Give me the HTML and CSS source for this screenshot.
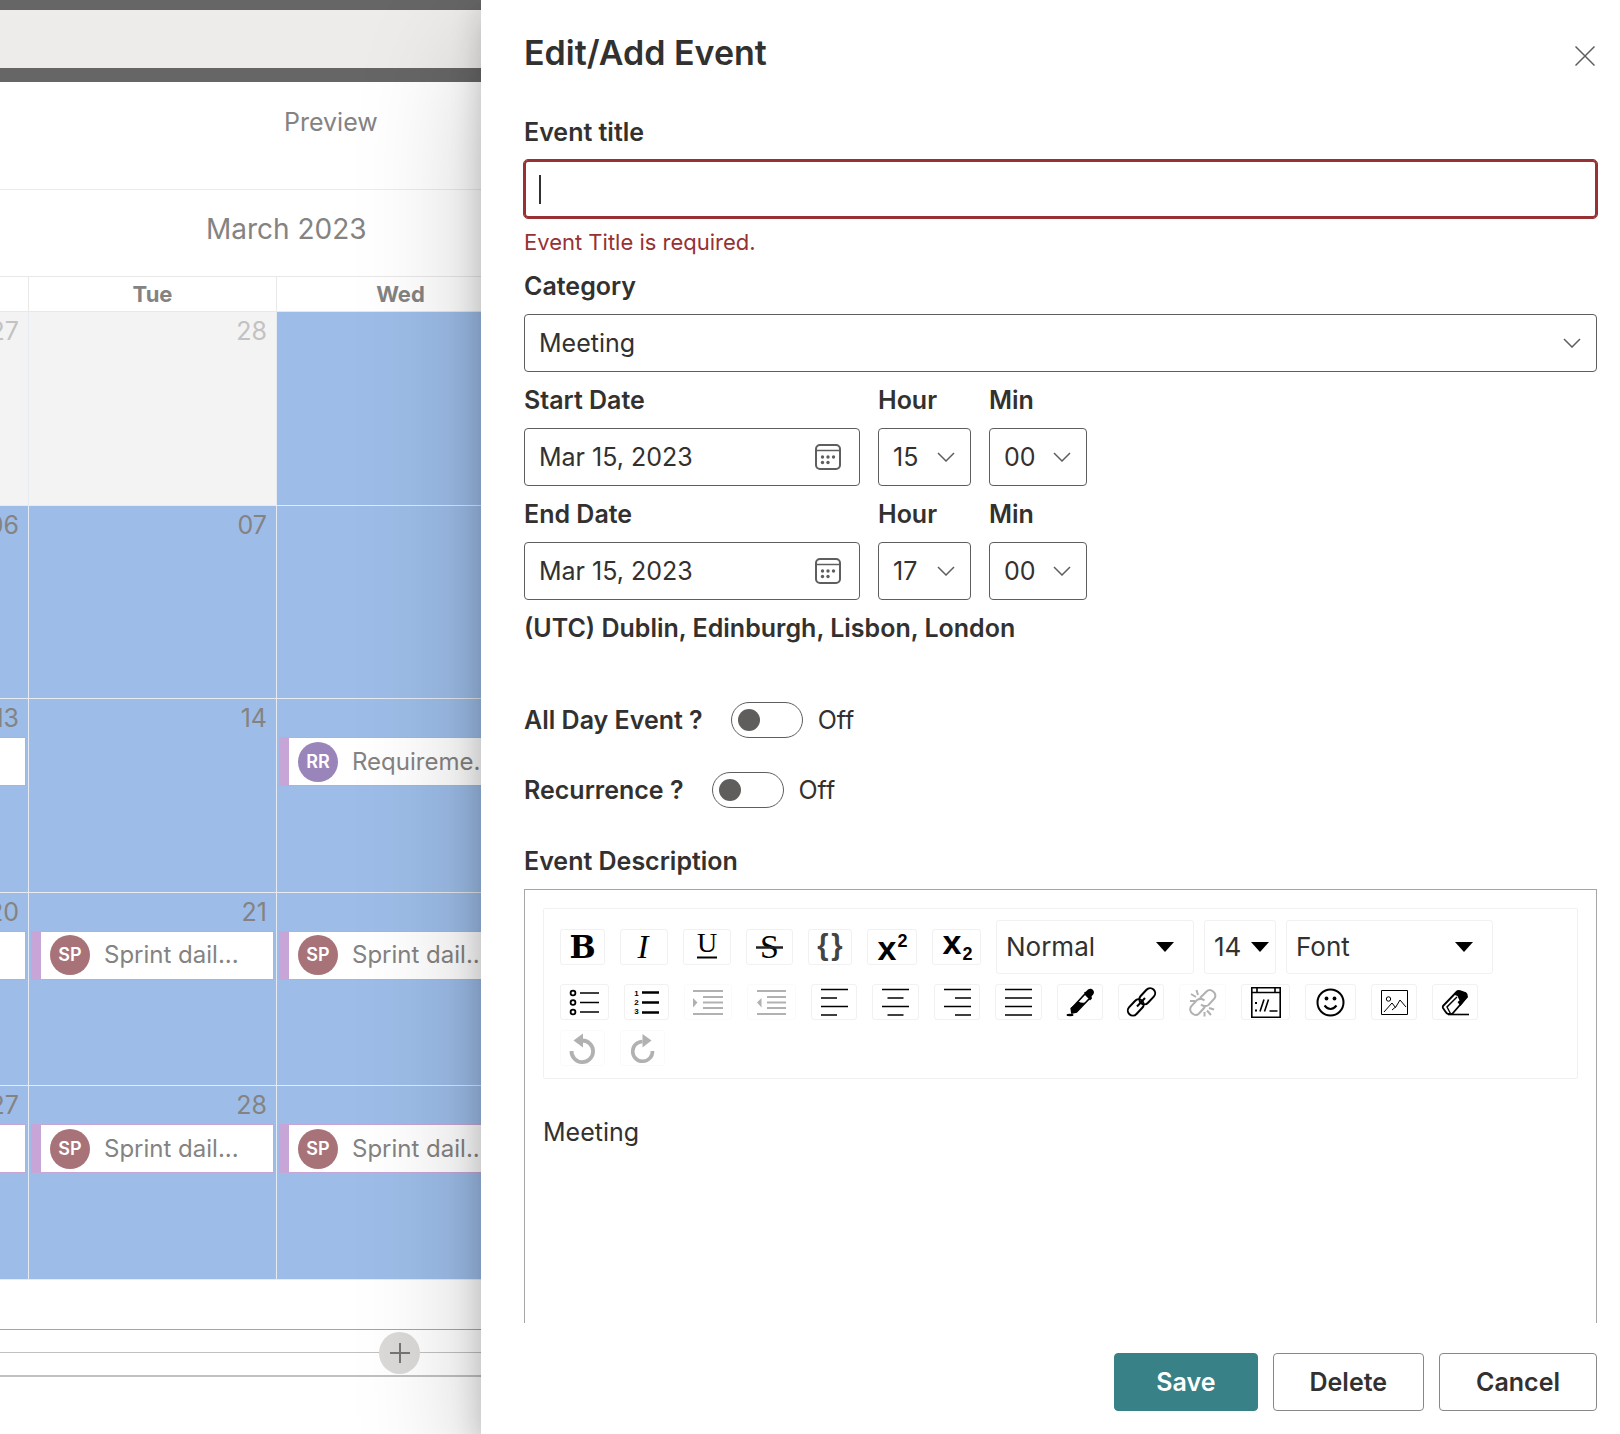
FILE: index.html
```html
<!DOCTYPE html>
<html lang="en">
<head>
<meta charset="utf-8">
<title>Edit/Add Event</title>
<link rel="stylesheet" href="styles.css">
</head>
<body>
<div class="layout">
  <main class="page">
    <div class="page-strip"></div>
    <div class="command-bar"></div>
    <div class="page-strip page-strip-thick"></div>
    <div class="preview-bar"><span>Preview</span></div>
    <h2 class="month">March 2023</h2>
    <table class="calendar">
      <thead>
        <tr><th></th><th>Tue</th><th>Wed</th></tr>
      </thead>
      <tbody>
        <tr>
          <td class="off-range"><div class="day">27</div></td>
          <td class="off-range"><div class="day">28</div></td>
          <td></td>
        </tr>
        <tr>
          <td><div class="day">06</div></td>
          <td><div class="day">07</div></td>
          <td></td>
        </tr>
        <tr>
          <td><div class="day">13</div><div class="event"></div></td>
          <td><div class="day">14</div></td>
          <td><div class="day"></div><div class="event"><span class="avatar avatar-rr">RR</span><span class="event-name">Requireme...</span></div></td>
        </tr>
        <tr>
          <td><div class="day">20</div><div class="event"></div></td>
          <td><div class="day">21</div><div class="event"><span class="avatar">SP</span><span class="event-name">Sprint dail...</span></div></td>
          <td><div class="day"></div><div class="event"><span class="avatar">SP</span><span class="event-name">Sprint dail...</span></div></td>
        </tr>
        <tr>
          <td><div class="day">27</div><div class="event"></div></td>
          <td><div class="day">28</div><div class="event"><span class="avatar">SP</span><span class="event-name">Sprint dail...</span></div></td>
          <td><div class="day"></div><div class="event"><span class="avatar">SP</span><span class="event-name">Sprint dail...</span></div></td>
        </tr>
      </tbody>
    </table>
    <div class="add-section">
      <span class="add-line"></span>
      <button class="add-button" type="button" aria-label="Add a new web part">
        <svg width="20" height="20" viewBox="0 0 20 20"><path d="M10 0v20M0 10h20" stroke="#767573" stroke-width="2"/></svg>
      </button>
      <span class="add-line"></span>
    </div>
  </main>

  <form class="drawer">
    <header class="drawer-header">
      <h1>Edit/Add Event</h1>
      <button class="close" type="button" aria-label="Close">
        <svg width="20" height="20" viewBox="0 0 20 20"><path d="M0.500 0.500l19 19M19.500 0.500l-19 19" stroke="#5f5e5c" stroke-width="1.500"/></svg>
      </button>
    </header>

    <div class="drawer-body">
      <div class="field">
        <label for="title">Event title</label>
        <div class="control">
          <input class="box box-invalid" id="title" type="text" aria-describedby="title-error">
          <span class="caret"></span>
        </div>
        <p class="error" id="title-error">Event Title is required.</p>
      </div>

      <div class="field">
        <label for="category">Category</label>
        <div class="control">
          <select class="box" id="category"><option>Meeting</option></select>
          <svg class="control-icon" width="18" height="10" viewBox="0 0 18 10"><path d="M1 1l8 8 8-8" fill="none" stroke="#5f5e5c" stroke-width="1.500"/></svg>
        </div>
      </div>

      <div class="date-row">
        <div class="field date">
          <label for="start">Start Date</label>
          <div class="control">
            <input class="box" id="start" type="text" value="Mar 15, 2023">
            <svg class="control-icon" width="26" height="26" viewBox="0 0 26 26"><rect x="1" y="1" width="24" height="24" rx="4" fill="none" stroke="#5f5e5c" stroke-width="2"/><path d="M1 6.500h24" stroke="#5f5e5c" stroke-width="1.500"/><g fill="#5f5e5c"><circle cx="7.500" cy="13" r="1.700"/><circle cx="13" cy="13" r="1.700"/><circle cx="18.500" cy="13" r="1.700"/><circle cx="7.500" cy="18.500" r="1.700"/><circle cx="13" cy="18.500" r="1.700"/></g></svg>
          </div>
        </div>
        <div class="field hour">
          <label for="start-hour">Hour</label>
          <div class="control">
            <select class="box" id="start-hour"><option>15</option></select>
            <svg class="control-icon" width="18" height="10" viewBox="0 0 18 10"><path d="M1 1l8 8 8-8" fill="none" stroke="#5f5e5c" stroke-width="1.500"/></svg>
          </div>
        </div>
        <div class="field minute">
          <label for="start-min">Min</label>
          <div class="control">
            <select class="box" id="start-min"><option>00</option></select>
            <svg class="control-icon" width="18" height="10" viewBox="0 0 18 10"><path d="M1 1l8 8 8-8" fill="none" stroke="#5f5e5c" stroke-width="1.500"/></svg>
          </div>
        </div>
      </div>

      <div class="date-row">
        <div class="field date">
          <label for="end">End Date</label>
          <div class="control">
            <input class="box" id="end" type="text" value="Mar 15, 2023">
            <svg class="control-icon" width="26" height="26" viewBox="0 0 26 26"><rect x="1" y="1" width="24" height="24" rx="4" fill="none" stroke="#5f5e5c" stroke-width="2"/><path d="M1 6.500h24" stroke="#5f5e5c" stroke-width="1.500"/><g fill="#5f5e5c"><circle cx="7.500" cy="13" r="1.700"/><circle cx="13" cy="13" r="1.700"/><circle cx="18.500" cy="13" r="1.700"/><circle cx="7.500" cy="18.500" r="1.700"/><circle cx="13" cy="18.500" r="1.700"/></g></svg>
          </div>
        </div>
        <div class="field hour">
          <label for="end-hour">Hour</label>
          <div class="control">
            <select class="box" id="end-hour"><option>17</option></select>
            <svg class="control-icon" width="18" height="10" viewBox="0 0 18 10"><path d="M1 1l8 8 8-8" fill="none" stroke="#5f5e5c" stroke-width="1.500"/></svg>
          </div>
        </div>
        <div class="field minute">
          <label for="end-min">Min</label>
          <div class="control">
            <select class="box" id="end-min"><option>00</option></select>
            <svg class="control-icon" width="18" height="10" viewBox="0 0 18 10"><path d="M1 1l8 8 8-8" fill="none" stroke="#5f5e5c" stroke-width="1.500"/></svg>
          </div>
        </div>
      </div>

      <p class="timezone">(UTC) Dublin, Edinburgh, Lisbon, London</p>

      <div class="toggles">
        <div class="toggle-row">
          <label for="all-day">All Day Event ?</label>
          <input class="toggle" id="all-day" type="checkbox" role="switch">
          <span class="toggle-state">Off</span>
        </div>
        <div class="toggle-row">
          <label for="recurrence">Recurrence ?</label>
          <input class="toggle" id="recurrence" type="checkbox" role="switch">
          <span class="toggle-state">Off</span>
        </div>
      </div>

      <div class="field editor-field">
        <span class="editor-label" id="description-label">Event Description</span>
        <div class="editor">
          <div class="toolbar">
            <div class="tool-row">
              <button class="tool" type="button" aria-label="Bold"><svg width="43" height="34"><text class="glyph-slab" x="21.500" y="28" font-size="31" font-weight="700">B</text></svg></button>
              <button class="tool" type="button" aria-label="Italic"><svg width="46" height="34"><text class="glyph-serif" x="22" y="28" font-size="33" font-style="italic">I</text></svg></button>
              <button class="tool" type="button" aria-label="Underline"><svg width="46" height="34"><text class="glyph-serif" x="23" y="22" font-size="28">U</text><path d="M13 27.500h20" stroke="#000" stroke-width="2"/></svg></button>
              <button class="tool" type="button" aria-label="Strikethrough"><svg width="45" height="34"><text class="glyph-serif" x="22.500" y="28" font-size="34">S</text><path d="M9 17.500h27" stroke="#222" stroke-width="2.500"/></svg></button>
              <button class="tool" type="button" aria-label="Monospace"><svg width="42" height="34"><text class="glyph-sans" x="14" y="25" font-size="29" fill="#444">{</text><text class="glyph-sans" x="28" y="25" font-size="29" fill="#444">}</text></svg></button>
              <button class="tool" type="button" aria-label="Superscript"><svg width="48" height="34"><text class="glyph-sans" x="19" y="30" font-size="34">x</text><text class="glyph-sans" x="34.500" y="17" font-size="18">2</text></svg></button>
              <button class="tool" type="button" aria-label="Subscript"><svg width="47" height="34"><text class="glyph-sans" x="19" y="24" font-size="34">x</text><text class="glyph-sans" x="34.500" y="30" font-size="18">2</text></svg></button>
              <div class="tool-selects">
                <div class="tool-select block-type">
                  <select aria-label="Block type"><option>Normal</option></select>
                  <svg class="control-icon" width="18" height="10"><path d="M0 0h18l-9 10z"/></svg>
                </div>
                <div class="tool-select font-size">
                  <select aria-label="Font size"><option>14</option></select>
                  <svg class="control-icon" width="18" height="10"><path d="M0 0h18l-9 10z"/></svg>
                </div>
                <div class="tool-select font-family">
                  <select aria-label="Font"><option>Font</option></select>
                  <svg class="control-icon" width="18" height="10"><path d="M0 0h18l-9 10z"/></svg>
                </div>
              </div>
            </div>
            <div class="tool-row">
              <button class="tool" type="button" aria-label="Unordered list"><svg width="47" height="34" fill="none" stroke="#000"><g stroke-width="1.800"><circle cx="12" cy="8" r="2.400"/><circle cx="12" cy="17.500" r="2.400"/><circle cx="12" cy="27" r="2.400"/></g><path d="M19 8h19M19 17.500h19M19 27h19" stroke-width="1.700"/></svg></button>
              <button class="tool" type="button" aria-label="Ordered list"><svg width="43" height="34"><text class="glyph-sans" x="11.500" y="11" font-size="8">1</text><text class="glyph-sans" x="11.500" y="20" font-size="8">2</text><text class="glyph-sans" x="11.500" y="29" font-size="8">3</text><path d="M17 7.500h17M17 17.500h17M17 27.500h17" stroke="#000" stroke-width="2.500"/></svg></button>
              <button class="tool" type="button" aria-label="Indent" disabled><svg width="46" height="34"><path d="M8 6h30M18 12h20M18 17.500h20M18 23h20M8 29h30" stroke="#000" stroke-width="2"/><path d="M8 13l4.500 4.500-4.500 5z"/></svg></button>
              <button class="tool" type="button" aria-label="Outdent" disabled><svg width="47" height="34"><path d="M9 6h29M19 12h19M19 17.500h19M19 23h19M9 29h29" stroke="#000" stroke-width="2"/><path d="M13.500 13l-4.500 4.500 4.500 5z"/></svg></button>
              <button class="tool" type="button" aria-label="Align left"><svg width="44" height="34"><path d="M9 4.500h27M9 13h16M9 21.500h27M9 30h16" stroke="#000" stroke-width="1.600"/></svg></button>
              <button class="tool" type="button" aria-label="Align center"><svg width="45" height="34"><path d="M9 4.500h27M14.500 13h16M9 21.500h27M14.500 30h16" stroke="#000" stroke-width="1.600"/></svg></button>
              <button class="tool" type="button" aria-label="Align right"><svg width="44" height="34"><path d="M9 4.500h27M20 13h16M9 21.500h27M20 30h16" stroke="#000" stroke-width="1.600"/></svg></button>
              <button class="tool" type="button" aria-label="Justify"><svg width="45" height="34"><path d="M9 4.500h27M9 13h27M9 21.500h27M9 30h27" stroke="#000" stroke-width="1.600"/></svg></button>
              <button class="tool" type="button" aria-label="Text color"><svg width="44" height="34"><path d="M26 7.500l2-1 2-2c3-2.500 7.500 1 5.500 4.500l-2 2.500.5 2-2 2z"/><path d="M27 9l4.500 4.500L18.500 27l-4.500 1-.5-4.500z" fill="#fff" stroke="#000" stroke-width="1.600"/><path d="M20.500 16.500q3 2 6.500 1L18 27.500l-5 .5-.5-5z"/><ellipse cx="12" cy="30" rx="3.500" ry="1.200"/></svg></button>
              <button class="tool" type="button" aria-label="Link"><svg width="44" height="34" fill="none" stroke="#000" stroke-width="2"><rect x="19" y="6.300" width="18.500" height="10" rx="5" transform="rotate(-47 28.200 11.300)"/><rect x="7.500" y="17.500" width="18.500" height="10" rx="5" transform="rotate(-47 16.700 22.500)"/><path d="M18 21.500l8-8.500"/></svg></button>
              <button class="tool" type="button" aria-label="Unlink" disabled><svg width="45" height="34" fill="none" stroke="#000" stroke-width="2"><path d="M20 13l6.500-6.500c4-4 11 1.500 8 7l-6 6.500q-4 2.500-7.500-.500"/><path d="M25 22l-6 6.500c-4 4-11-1.500-8-7l6-6.500q4-2.500 7.500.500"/><path d="M11 9l5 3M16.500 5l1.500 5M10 16h5M29 23l5 1.500M27 25.500l4 4.500M24.500 27v4.500"/></svg></button>
              <button class="tool" type="button" aria-label="Embed"><svg width="47" height="34" fill="none" stroke="#000" stroke-width="1.600"><path d="M9.800 2.800h28.400v29.400H9.800zM9.800 7.500h28.400M15 3v4.500M33 3v4.500M22 14.500l-4 12M26.500 14.500l-4 12M27.500 26h8"/><path d="M14 17v2M14 24.500v2" stroke-width="2"/></svg></button>
              <button class="tool" type="button" aria-label="Emoji"><svg width="49" height="34" fill="none" stroke="#000" stroke-width="2"><circle cx="24.500" cy="17.500" r="13"/><path d="M18.500 20.500q6 7 12 0"/><g fill="#000" stroke="none"><circle cx="20.500" cy="13.500" r="1.900"/><circle cx="28.500" cy="13.500" r="1.900"/></g></svg></button>
              <button class="tool" type="button" aria-label="Image"><svg width="44" height="34" fill="none" stroke="#000"><path d="M9.500 5.500h26v24h-26z"/><circle cx="16.500" cy="14" r="2.200"/><path d="M12 27l8-9 3.500 4.500 4.500-7.500 6 7M20 25l3.500-3"/></svg></button>
              <button class="tool" type="button" aria-label="Remove formatting"><svg width="44" height="34"><path d="M10 21L24 6.500q1-1 3-.5l5.500 2q1.500 1 1.500 4L20 28q-1 1.500-3 1h-2q-1.500-.5-3-3l-2-3q-.5-1 0-2z" fill="#fff" stroke="#000" stroke-width="1.800"/><path d="M20.500 9.500L25 5.500l8 2.500 1.500 4-7 9-3-4 2-1.500-2-4.500z"/><path d="M24 12L14 22l3.500 6.500" fill="none" stroke="#000" stroke-width="1.400"/><path d="M15 29.500h21" stroke="#000" stroke-width="1.600"/></svg></button>
            </div>
            <div class="tool-row">
              <button class="tool" type="button" aria-label="Undo" disabled><svg width="43" height="34"><path d="M10.500 20a10.800 10.800 0 1 0 11-10.500" fill="none" stroke="#000" stroke-width="3.800"/><path d="M12.500 9.500L22 2.500v14z"/></svg></button>
              <button class="tool" type="button" aria-label="Redo" disabled><svg width="43" height="34"><path d="M31.500 20a9.900 9.900 0 1 1-10-9.500" fill="none" stroke="#000" stroke-width="3.600"/><path d="M30.500 9.500L21.500 3v13.500z"/></svg></button>
            </div>
          </div>
          <div class="editor-text" contenteditable="true" role="textbox" aria-labelledby="description-label">Meeting</div>
        </div>
      </div>
    </div>

    <footer class="drawer-footer">
      <button class="button button-primary" type="submit">Save</button>
      <button class="button" type="button">Delete</button>
      <button class="button" type="button">Cancel</button>
    </footer>
  </form>
</div>
</body>
</html>
```
FILE: styles.css
```css
* { box-sizing: border-box; }

body {
  margin: 0;
  font-family: Inter, "Liberation Sans", sans-serif;
  font-size: 25px;
  line-height: 32px;
  color: #323130;
  background: #fff;
}

h1, h2, p { margin: 0; }

button, input, select { font: inherit; color: inherit; }

svg { display: block; }

.layout {
  display: grid;
  grid-template-columns: 481px 1fr;
  height: 100vh;
  overflow: hidden;
}

/* Page behind the drawer */
.page {
  min-width: 0;
  overflow: hidden;
  color: #848382;
}

.page-strip { height: 10px; background: #666; }
.page-strip-thick { height: 14px; }
.command-bar { height: 58px; background: #edecea; }

.preview-bar {
  height: 108px;
  padding: 24px 0 0 284px;
  border-bottom: 1px solid #edebe9;
}

.month {
  padding: 19px 0 27px 206px;
  font-size: 28px;
  font-weight: 400;
  line-height: 40px;
}

.calendar {
  width: 745px;
  height: 1004px;
  margin-left: -220px;
  border-collapse: collapse;
  table-layout: fixed;
}

.calendar th {
  height: 35px;
  padding: 0;
  border: 1px solid #e9e8e7;
  font-size: 22px;
  font-weight: 700;
  line-height: 32px;
}

.calendar td {
  height: 193px;
  padding: 0 2px;
  border: 1px solid #e6ebf1;
  background: #9dbde8;
  vertical-align: top;
}

.calendar .off-range { background: #f3f3f3; color: #c2c2c2; }

.day {
  height: 38px;
  padding: 3px 7px 0 0;
  text-align: right;
}

.event {
  display: flex;
  align-items: center;
  gap: 14px;
  height: 49px;
  padding-left: 9px;
  border: 1px solid #c7a6d7;
  border-left-width: 10px;
  background: #fff;
  white-space: nowrap;
}

.avatar {
  flex: none;
  width: 40px;
  height: 40px;
  border-radius: 50%;
  background: #a77378;
  color: #fff;
  font-size: 18px;
  font-weight: 600;
  line-height: 40px;
  text-align: center;
}

.avatar-rr { background: #9a85bb; }

.event-name { font-size: 24px; }

.add-section {
  display: flex;
  align-items: center;
  height: 48px;
  margin-top: 49px;
  border-top: 1px solid #8cb0b1;
  border-bottom: 2px solid #c1c1c1;
}

.add-line { flex: 1; height: 1px; background: #c1c1c1; }
.add-line:first-child { flex: 0 0 379px; }

.add-button {
  display: grid;
  place-items: center;
  width: 41px;
  height: 42px;
  padding: 0;
  border: 0;
  border-radius: 50%;
  background: #dbdad8;
}

/* Drawer */
.drawer {
  position: relative;
  display: flex;
  flex-direction: column;
  min-width: 0;
  min-height: 0;
  background: #fff;
  box-shadow: 0 51px 115px rgba(0, 0, 0, .22), 0 10px 29px rgba(0, 0, 0, .18);
}

.drawer-header {
  display: flex;
  justify-content: space-between;
  align-items: center;
  padding: 31px 25px 41px 43px;
}

.drawer-header h1 {
  font-size: 34px;
  font-weight: 600;
  line-height: 44px;
}

.close {
  padding: 6px 0 0;
  border: 0;
  background: none;
}

.drawer-body {
  flex: 1;
  display: flex;
  flex-direction: column;
  gap: 12px;
  min-height: 0;
  overflow: hidden;
  padding: 0 23px 0 43px;
}

.field {
  display: flex;
  flex-direction: column;
  gap: 12px;
}

label, .timezone, .editor-label { font-weight: 600; }

.control { display: grid; align-items: center; }
.control > * { grid-area: 1 / 1; }

.control-icon { justify-self: end; margin-right: 16px; pointer-events: none; }
.date .control-icon { margin-right: 19px; }

.box {
  appearance: none;
  width: 100%;
  height: 58px;
  padding: 0 14px;
  border: 1px solid #605e5c;
  border-radius: 4px;
  background: #fff;
  outline: 0;
}

.box-invalid {
  border: 2px solid #973133;
  outline: 1px solid #973133;
}

.caret {
  width: 2px;
  height: 29px;
  margin-left: 15px;
  background: #323130;
}

.error {
  margin-bottom: 3px;
  font-size: 22px;
  line-height: 25px;
  color: #973133;
}

.date-row { display: flex; gap: 18px; }
.date { width: 336px; }
.hour { width: 93px; }
.minute { width: 98px; }

.toggles {
  display: flex;
  flex-direction: column;
  gap: 34px;
  padding: 46px 0 25px;
}

.toggle-row { display: flex; align-items: center; height: 36px; }

.toggle {
  appearance: none;
  display: flex;
  align-items: center;
  width: 72px;
  height: 36px;
  margin: 0 15px 0 28px;
  padding: 0 6px;
  border: 1px solid #605e5c;
  border-radius: 18px;
}

.toggle::before {
  content: "";
  width: 22px;
  height: 22px;
  border-radius: 50%;
  background: #605e5c;
}

.editor {
  min-height: 480px;
  padding: 18px;
  border: 1px solid #a6a6a6;
}

.toolbar {
  display: flex;
  flex-direction: column;
  gap: 10px;
  padding: 11px 16px 12px;
  border: 1px solid #f1f1f1;
  border-radius: 2px;
}

.tool-row { display: flex; align-items: center; gap: 15px; }

.tool {
  height: 36px;
  padding: 0;
  border: 1px solid #f1f1f1;
  border-radius: 3px;
  background: #fff;
}

.tool:disabled { opacity: .3; }

.tool text { text-anchor: middle; }
.glyph-slab { font-family: "DejaVu Serif", serif; }
.glyph-serif { font-family: "Liberation Serif", serif; }
.glyph-sans { font-family: "Liberation Sans", sans-serif; font-weight: 700; }

.tool-selects { display: flex; gap: 10px; }

.tool-select { display: grid; align-items: center; }
.tool-select > * { grid-area: 1 / 1; }
.tool-select .control-icon { margin-right: 20px; }
.tool-select.font-size .control-icon { margin-right: 7px; }

.tool-select select {
  appearance: none;
  width: 100%;
  height: 54px;
  padding: 0 9px;
  border: 1px solid #f1f1f1;
  border-radius: 3px;
  background: #fff;
  font-size: 26px;
}

.block-type { width: 198px; }
.font-size { width: 72px; }
.font-family { width: 207px; }

.editor-text { padding-top: 37px; outline: 0; }

.drawer-footer {
  display: flex;
  justify-content: flex-end;
  gap: 15px;
  padding: 30px 23px 23px;
}

.button {
  height: 58px;
  padding: 0 36px;
  border: 1px solid #8a8886;
  border-radius: 4px;
  background: #fff;
  font-weight: 600;
}

.button-primary {
  padding: 0 41px;
  border-color: #388186;
  background: #388186;
  color: #fff;
}
```
